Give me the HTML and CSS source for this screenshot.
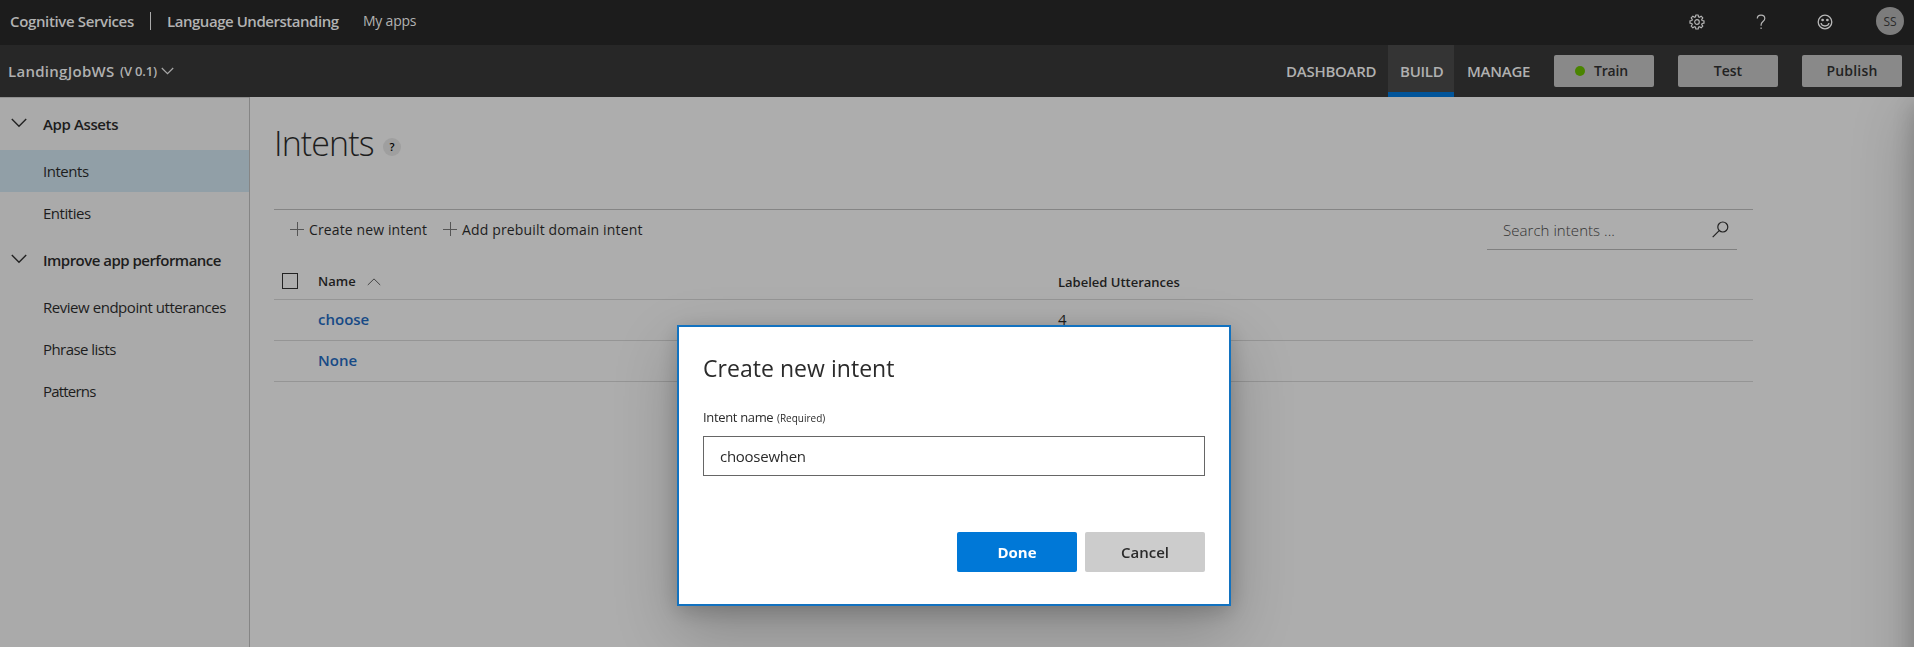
FILE: index.html
```html
<!DOCTYPE html>
<html lang="en">
<head>
<meta charset="utf-8">
<title>Language Understanding</title>
<link rel="stylesheet" href="styles.css">
</head>
<body>
<header class="topbar">
  <span class="brand">Cognitive Services</span>
  <span class="divider"></span>
  <span class="product">Language Understanding</span>
  <span class="myapps">My apps</span>
  <div class="tools">
    <svg class="tool" width="16" height="16" viewBox="0 0 16 16" fill="none" stroke="#b4b4b4" stroke-width="1.2" stroke-linejoin="round"><path d="M6.800 1h2.400l.3 1.900 1 .4 1.600-1.100 1.700 1.700-1.100 1.600.4 1 1.900.3v2.400l-1.900.3-.4 1 1.100 1.600-1.700 1.700-1.600-1.100-1 .4-.3 1.900H6.800l-.3-1.900-1-.4-1.600 1.100-1.700-1.700 1.100-1.600-.4-1L1 9.200V6.800l1.900-.3.4-1-1.100-1.600 1.700-1.700 1.600 1.100 1-.4z"/><circle cx="8" cy="8" r="2.300"/></svg>
    <svg class="tool" width="16" height="16" viewBox="0 0 16 16" fill="none" stroke="#b4b4b4" stroke-width="1.2"><path d="M4.300 4.600C4.300 2.400 5.800 1.100 8 1.100s3.800 1.300 3.800 3.300c0 3-3.700 3.200-3.700 6.300v1"/><path d="M8.100 13.600v1.500"/></svg>
    <svg class="tool" width="16" height="16" viewBox="0 0 16 16" fill="none" stroke="#b8b8b8" stroke-width="1.300"><circle cx="8" cy="8" r="6.800"/><path d="M4 9c.7 4 7.300 4 8 0"/><circle cx="5.600" cy="6" r=".7" fill="#b8b8b8"/><circle cx="10.400" cy="6" r=".7" fill="#b8b8b8"/></svg>
    <span class="avatar">SS</span>
  </div>
</header>

<nav class="appbar">
  <span class="appname">LandingJobWS</span>
  <span class="version">(V 0.1)</span>
  <svg class="version-caret" width="13" height="8" viewBox="0 0 13 8" fill="none" stroke="#a8a8a8" stroke-width="1.200"><path d="M.8 1l5.700 5.700L12.200 1"/></svg>
  <div class="tabs">
    <span class="tab">DASHBOARD</span>
    <span class="tab tab-active">BUILD</span>
    <span class="tab tab-manage">MANAGE</span>
  </div>
  <div class="actions">
    <button class="action action-train"><span class="dot"></span>Train</button>
    <button class="action action-test">Test</button>
    <button class="action action-publish">Publish</button>
  </div>
</nav>

<div class="layout">
  <aside class="sidebar">
    <div class="group"><svg class="group-caret" width="16" height="10" viewBox="0 0 16 10" fill="none" stroke="#222" stroke-width="1.400"><path d="M.8 1L8 8.200 15.200 1"/></svg><span class="assets">App Assets</span></div>
    <div class="item item-active">Intents</div>
    <div class="item">Entities</div>
    <div class="group group-improve"><svg class="group-caret" width="16" height="10" viewBox="0 0 16 10" fill="none" stroke="#222" stroke-width="1.400"><path d="M.8 1L8 8.200 15.200 1"/></svg><span class="improve">Improve app performance</span></div>
    <div class="item">Review endpoint utterances</div>
    <div class="item item-phrase">Phrase lists</div>
    <div class="item item-patterns">Patterns</div>
  </aside>

  <main class="content">
    <div class="heading"><h1 class="title">Intents</h1><span class="help">?</span></div>
    <div class="toolbar">
      <div class="command"><svg width="14" height="14" viewBox="0 0 14 14" stroke="#555" stroke-width="1"><path d="M7.500 0v14M0 7.500h14"/></svg><span class="create">Create new intent</span></div>
      <div class="command"><svg width="14" height="14" viewBox="0 0 14 14" stroke="#555" stroke-width="1"><path d="M7.500 0v14M0 7.500h14"/></svg><span class="prebuilt">Add prebuilt domain intent</span></div>
      <div class="search">
        <span class="search-text">Search intents ...</span>
        <svg width="17" height="17" viewBox="0 0 17 17" fill="none" stroke="#222" stroke-width="1.200"><circle cx="10.800" cy="6" r="5"/><path d="M7.200 9.700L.7 16.200"/></svg>
      </div>
    </div>
    <div class="table">
      <div class="row row-head">
        <span class="checkbox"></span>
        <span class="cell-name">Name<svg class="sort" width="14" height="8" viewBox="0 0 14 8" fill="none" stroke="#444" stroke-width="1"><path d="M.8 7L7 .9 13.200 7"/></svg></span>
        <span class="cell-count count-head">Labeled Utterances</span>
      </div>
      <div class="row"><span class="cell-name link">choose</span><span class="cell-count">4</span></div>
      <div class="row"><span class="cell-name link">None</span><span class="cell-count"></span></div>
    </div>
  </main>
  <div class="side-panel"></div>
</div>

<div class="overlay">
  <section class="dialog">
    <h2 class="dialog-title">Create new intent</h2>
    <div class="label"><span class="label-name">Intent name</span><span class="label-required">(Required)</span></div>
    <div class="field">choosewhen</div>
    <div class="dialog-actions">
      <button class="btn btn-done">Done</button>
      <button class="btn btn-cancel">Cancel</button>
    </div>
  </section>
</div>
</body>
</html>
```

FILE: styles.css
```css
* { box-sizing: border-box; }
body {
  margin: 0;
  height: 647px;
  overflow: hidden;
  background: #adadad;
  color: #1d1d1d;
  font: 15px/20px "Open Sans", "Noto Sans", sans-serif;
  display: flex;
  flex-direction: column;
}
svg { display: block; flex: none; }
button { border: 0; padding: 0; font: inherit; color: inherit; }

.topbar {
  height: 45px;
  flex: none;
  padding: 0 10px 3px;
  display: flex;
  align-items: center;
  background: #1c1c1c;
  color: #b2b2b2;
  white-space: nowrap;
}
.brand { width: 140px; font-weight: 600; letter-spacing: -.36px; }
.divider { width: 1px; height: 18px; background: #aaa; margin-right: 16px; }
.product { width: 196px; font-weight: 600; letter-spacing: -.46px; }
.myapps { font-size: 14px; letter-spacing: -.22px; }
.tools { margin-left: auto; display: flex; align-items: center; }
.tool { margin: 2px 48px 0 0; }
.avatar {
  width: 28px;
  height: 28px;
  margin-left: -5px;
  border-radius: 50%;
  background: #7c7c7c;
  color: #2a2a2a;
  font-size: 12px;
  line-height: 29px;
  text-align: center;
}

.appbar {
  height: 52px;
  flex: none;
  padding: 0 12px 0 8px;
  display: flex;
  align-items: center;
  background: #272727;
  color: #b0b0b0;
  font-weight: 600;
  white-space: nowrap;
}
.appname { width: 112px; letter-spacing: .28px; }
.version { width: 41px; font-size: 13px; letter-spacing: -.19px; }
.tabs { display: flex; align-self: stretch; margin-left: auto; }
.tab { width: 102px; line-height: 52px; letter-spacing: -.25px; }
.tab-active {
  width: 66px;
  padding-left: 12px;
  background: #343434;
  border-bottom: 5px solid #00549a;
}
.tab-manage { width: 100px; padding-left: 13px; }
.actions { display: flex; gap: 24px; }
.action {
  width: 100px;
  height: 32px;
  border-radius: 2px;
  background: #898989;
  color: #222;
  font-size: 14px;
  font-weight: 600;
  display: flex;
  align-items: center;
  justify-content: center;
}
.action-train { letter-spacing: -.2px; justify-content: flex-start; padding-left: 21px; }
.action-publish { letter-spacing: .2px; }
.dot { width: 10px; height: 10px; margin-right: 9px; border-radius: 50%; background: #4a8400; }

.layout { flex: 1; display: flex; min-height: 0; }
.sidebar {
  width: 250px;
  flex: none;
  background: #aaa;
  border-right: 1px solid #858585;
  box-shadow: inset 0 1px #909090;
}
.group { height: 53px; padding: 1px 0 0 11px; display: flex; align-items: center; font-weight: 600; white-space: nowrap; }
.group-improve { height: 52px; padding-top: 0; }
.group-caret { margin: 0 16px 3px 0; }
.assets { letter-spacing: -.38px; }
.improve { letter-spacing: -.52px; }
.item { height: 42px; padding-left: 43px; line-height: 42px; letter-spacing: -.46px; }
.item-active { background: #919fa7; }
.item-phrase { letter-spacing: -.55px; }
.item-patterns { letter-spacing: -.8px; }

.content { flex: 1; padding: 20px 0 0 24px; }
.heading { height: 92px; display: flex; align-items: flex-start; }
.title { margin: 0; width: 109px; font-size: 34px; font-weight: 300; line-height: 52px; letter-spacing: -.9px; }
.help {
  width: 18px;
  height: 18px;
  margin-top: 21px;
  border-radius: 50%;
  background: #9f9f9f;
  color: #000;
  font-size: 11px;
  font-weight: 600;
  line-height: 18px;
  text-align: center;
}
.toolbar {
  width: 1479px;
  height: 54px;
  padding-left: 16px;
  border-top: 1px solid #858585;
  display: flex;
  font-size: 14px;
  white-space: nowrap;
}
.command { height: 40px; display: flex; align-items: center; gap: 5px; margin-right: 16px; }
.command svg { margin-bottom: 3px; }
.create { width: 118px; letter-spacing: .12px; }
.prebuilt { letter-spacing: .15px; }
.search {
  width: 250px;
  height: 40px;
  margin: 0 16px 0 auto;
  padding: 0 8px 0 16px;
  border-bottom: 1px solid #808080;
  display: flex;
  align-items: center;
  justify-content: space-between;
}
.search-text { font-size: 15px; font-weight: 300; letter-spacing: .05px; color: #333; }

.table { width: 1479px; }
.row {
  height: 41px;
  padding-bottom: 2px;
  border-bottom: 1px solid #959595;
  display: grid;
  grid-template-columns: 44px 740px 1fr;
  align-items: center;
}
.row-head { height: 37px; padding-bottom: 0; font-size: 13px; font-weight: 600; }
.count-head { padding-top: 2px; }
.checkbox { width: 16px; height: 16px; margin-left: 8px; border: 1px solid #222; }
.cell-name { grid-column: 2; display: flex; align-items: center; }
.sort { margin: 2px 0 0 11px; }
.link { color: #174a86; font-weight: 600; }

.side-panel {
  position: absolute;
  top: 97px;
  right: 0;
  bottom: 0;
  width: 90px;
  overflow: hidden;
}
.side-panel::after {
  content: "";
  position: absolute;
  left: 90px;
  top: -10px;
  width: 300px;
  height: 720px;
  box-shadow: 0 25px 58px rgba(0, 0, 0, .22), 0 18px 20px rgba(0, 0, 0, .18);
}

.overlay {
  position: fixed;
  inset: 0;
  padding-top: 325px;
  padding-right: 6px;
  display: flex;
  align-items: flex-start;
  justify-content: center;
}
.dialog {
  width: 554px;
  height: 281px;
  padding: 25px 24px 0;
  border: 2px solid #1272c0;
  background: #fff;
  color: #2b2b2b;
  box-shadow: 0 25px 58px rgba(0, 0, 0, .22), 0 5px 20px rgba(0, 0, 0, .18);
}
.dialog-title { margin: 0; font-size: 23px; font-weight: 400; line-height: 32px; letter-spacing: .04px; }
.label { height: 26px; margin-top: 21px; display: flex; align-items: baseline; line-height: 24px; }
.label-name { width: 74px; font-size: 13px; letter-spacing: -.34px; }
.label-required { font-size: 10px; }
.field {
  height: 40px;
  margin-top: 5px;
  padding-left: 16px;
  border: 1px solid #666;
  line-height: 38px;
  letter-spacing: -.27px;
}
.dialog-actions { margin-top: 56px; display: flex; justify-content: flex-end; gap: 8px; }
.btn { width: 120px; height: 40px; border-radius: 2px; }
.btn-done { background: #0078d7; color: #fff; font-weight: 700; }
.btn-cancel { background: #ccc; font-weight: 600; }
```
